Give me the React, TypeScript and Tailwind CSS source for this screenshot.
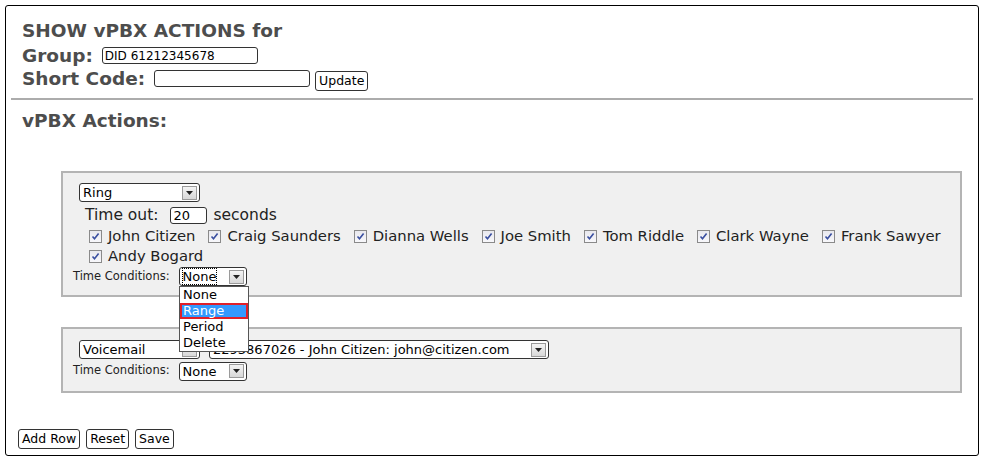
import React from 'react';

const font = { fontFamily: '"DejaVu Sans", Verdana, sans-serif' };

function Arrow() {
  return (
    <span className="flex h-[14px] w-[15px] items-center justify-center border border-[#9a9a9a] bg-gradient-to-b from-[#f4f4f4] to-[#d8d8d8]">
      <svg width="7" height="4" viewBox="0 0 7 4">
        <path d="M0 0h7L3.5 4z" fill="#222" />
      </svg>
    </span>
  );
}

function FakeSelect({ label, w, focus }: { label: string; w: string; focus?: boolean }) {
  return (
    <div className={`flex h-[19px] ${w} items-center justify-between rounded-[3px] border border-[#333] bg-white pl-[3px] pr-[2px]`}>
      <span className={`text-[13px] leading-[15px] text-black ${focus ? 'outline outline-1 outline-dotted outline-black' : ''}`}>{label}</span>
      <Arrow />
    </div>
  );
}

function Check({ label }: { label: string }) {
  return (
    <span className="mr-[13px] inline-flex items-center whitespace-nowrap">
      <span className="mr-[6px] flex h-[13px] w-[13px] items-center justify-center border border-[#8a8a8a] bg-gradient-to-b from-[#e8e8ee] to-[#f8f8fb]">
        <svg width="9" height="9" viewBox="0 0 9 9">
          <path d="M1.5 4.5l2 2.3L7.6 1.6" stroke="#3a4fa0" strokeWidth="1.6" fill="none" />
        </svg>
      </span>
      {label}
    </span>
  );
}

function Button({ children }: { children: React.ReactNode }) {
  return (
    <button className="h-[20px] rounded-[3px] border border-[#333] bg-white px-[3px] text-[12.5px] leading-[16px] text-black">
      {children}
    </button>
  );
}

export default function App() {
  const people = ['John Citizen', 'Craig Saunders', 'Dianna Wells', 'Joe Smith', 'Tom Riddle', 'Clark Wayne', 'Frank Sawyer', 'Andy Bogard'];

  return (
    <div className="h-[460px] w-[985px] bg-white pl-[5px] pt-[5px]" style={font}>
      <div className="h-[451px] w-[974px] rounded-[3px] border border-black">
        <div className="pl-[16px] pt-[12px] font-bold text-[#4d4d4d]">
          <div className="text-[18.5px] leading-[26px]">SHOW vPBX ACTIONS for</div>
          <div className="flex h-[23px] items-center text-[18.5px]">
            <span>Group:</span>
            <div className="ml-[9px] flex h-[17px] w-[156px] items-center rounded-[3px] border border-[#333] pl-[2px] text-[12px] font-normal text-black">DID 61212345678</div>
          </div>
          <div className="flex h-[23px] items-center text-[18.5px]">
            <span>Short Code:</span>
            <div className="ml-[9px] h-[17px] w-[156px] rounded-[3px] border border-[#333]" />
            <div className="ml-[5px] font-normal">
              <Button>Update</Button>
            </div>
          </div>
        </div>
        <div className="mx-[5px] mt-[8px] h-[2px] bg-[#acacac]" />
        <div className="pl-[16px] pt-[9px] text-[18.5px] font-bold leading-[24px] text-[#4d4d4d]">vPBX Actions:</div>

        <div className="ml-[55px] mt-[38px] h-[126px] w-[901px] border-2 border-[#b4b4b4] bg-[#f0f0f0] pl-[10px] pt-[10px] text-[#222]">
          <div className="ml-[6px]">
            <FakeSelect label="Ring" w="w-[121px]" />
          </div>
          <div className="ml-[12px] mt-[3px] flex h-[21px] items-center text-[15.5px]">
            <span>Time out:</span>
            <div className="ml-[12px] mr-[6px] flex h-[17px] w-[37px] items-center rounded-[3px] border border-[#333] bg-white pl-[2px] text-[13px] text-black">20</div>
            <span>seconds</span>
          </div>
          <div className="ml-[16px] flex w-[885px] flex-wrap text-[14.8px] leading-[20px]">
            {people.map((p) => (
              <Check key={p} label={p} />
            ))}
          </div>
          <div className="relative flex h-[21px] items-center text-[11.5px]">
            <span>Time Conditions:</span>
            <div className="ml-[9px]">
              <FakeSelect label="None" w="w-[68px]" focus />
            </div>
            <div className="absolute left-[106px] top-[20px] z-10 w-[70px] border border-[#555] bg-white text-[13px] leading-[16px] text-black">
              <div className="pl-[3px]">None</div>
              <div className="border-2 border-[#e0202a] bg-[#3399ff] pl-[1px] leading-[12px] text-white">Range</div>
              <div className="pl-[3px]">Period</div>
              <div className="pl-[3px]">Delete</div>
            </div>
          </div>
        </div>

        <div className="ml-[55px] mt-[30px] h-[66px] w-[901px] border-2 border-[#b4b4b4] bg-[#f0f0f0] pl-[10px] pt-[11px] text-[#222]">
          <div className="ml-[6px] flex gap-[9px]">
            <FakeSelect label="Voicemail" w="w-[121px]" />
            <FakeSelect label="2293867026 - John Citizen: john@citizen.com" w="w-[340px]" />
          </div>
          <div className="mt-[1px] flex h-[22px] items-center text-[11.5px]">
            <span>Time Conditions:</span>
            <div className="ml-[9px]">
              <FakeSelect label="None" w="w-[68px]" />
            </div>
          </div>
        </div>

        <div className="ml-[12px] mt-[36px] flex gap-[6px]">
          <Button>Add Row</Button>
          <Button>Reset</Button>
          <Button>Save</Button>
        </div>
      </div>
    </div>
  );
}
